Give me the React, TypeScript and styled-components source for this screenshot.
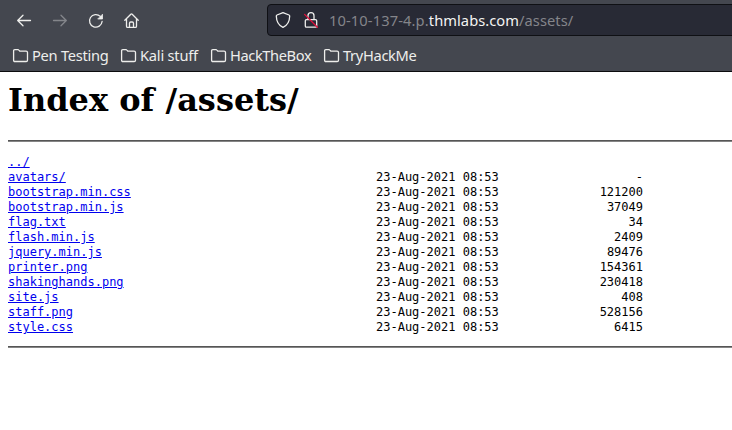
import React from 'react';
import styled, { createGlobalStyle } from 'styled-components';

const GlobalStyle = createGlobalStyle`
  * { box-sizing: border-box; }
  body { margin: 0; background: #fff; overflow: hidden; }
`;

const Browser = styled.div`
  width: 732px;
  height: 430px;
  overflow: hidden;
  background: #fff;
`;

const Chrome = styled.header`
  height: 72px;
  background: #44474f;
  border-bottom: 1px solid #0c0c0e;
  font-family: 'Noto Sans', sans-serif;
  color: #eeeeec;
`;

const Toolbar = styled.div`
  display: flex;
  height: 40px;
  padding: 4px 0 4px 12px;
`;

const NavButtons = styled.nav`
  display: flex;
  flex: 0 0 255px;
  gap: 11px;
`;

const NavButton = styled.button<{ $disabled?: boolean }>`
  display: flex;
  align-items: center;
  justify-content: center;
  width: 25px;
  height: 33px;
  padding: 0;
  border: 0;
  background: none;
  color: ${(p) => (p.$disabled ? '#84868b' : '#eeeeec')};
`;

const Icon = styled.svg`
  display: block;
  flex: none;
  fill: none;
  stroke: currentColor;
  stroke-width: 1.3;
  stroke-linecap: round;
  stroke-linejoin: round;
`;

const AddressBar = styled.div`
  display: flex;
  flex: none;
  align-items: center;
  width: 480px;
  height: 32px;
  padding-left: 7px;
  border: 1px solid #0f1014;
  border-radius: 4px;
  background: #282a35;
`;

const SiteIcons = styled.div`
  display: flex;
  flex: 0 0 54px;
  gap: 10px;
`;

const Url = styled.span`
  font-size: 14.67px;
  line-height: 20px;
  letter-spacing: 0.06px;
  white-space: pre;
  color: #84858a;
`;

const Host = styled.span`
  letter-spacing: 0.12px;
`;

const Domain = styled.span`
  color: #f4f4f2;
`;

const Bookmarks = styled.div`
  display: flex;
  height: 31px;
  padding-left: 12px;
`;

const Bookmark = styled.div<{ $width: number }>`
  display: flex;
  align-items: center;
  flex: 0 0 ${(p) => p.$width}px;
  gap: 3px;
`;

const BookmarkLabel = styled.span<{ $tracking: number }>`
  height: 22px;
  font-size: 14.67px;
  line-height: 20px;
  letter-spacing: ${(p) => p.$tracking}px;
  white-space: nowrap;
`;

const Page = styled.main`
  padding: 9px 0 0 8px;
  background: #fff;
  color: #000;
`;

const Title = styled.h1`
  margin: 0;
  height: 59px;
  font: bold 32px/38px 'DejaVu Serif', serif;
`;

const Rule = styled.hr`
  height: 2px;
  margin: 0;
  border: 0;
  border-top: 1px solid #555;
  background: #858585;
`;

const Listing = styled.div`
  padding: 13px 0 11px;
  font: 12px/15px 'DejaVu Sans Mono', monospace;
`;

const Entry = styled.div`
  display: grid;
  grid-template-columns: 368px 123px 144px;
  height: 15px;
`;

const FileLink = styled.a`
  justify-self: start;
  color: #0000ee;
  text-decoration: underline;
`;

const Size = styled.span`
  text-align: right;
`;

const bookmarks = [
  { name: 'Pen Testing', width: 108, tracking: -0.27 },
  { name: 'Kali stuff', width: 90, tracking: -0.22 },
  { name: 'HackTheBox', width: 113, tracking: -0.4 },
  { name: 'TryHackMe', width: 100, tracking: -0.33 },
];

const files: [string, string][] = [
  ['avatars/', '-'],
  ['bootstrap.min.css', '121200'],
  ['bootstrap.min.js', '37049'],
  ['flag.txt', '34'],
  ['flash.min.js', '2409'],
  ['jquery.min.js', '89476'],
  ['printer.png', '154361'],
  ['shakinghands.png', '230418'],
  ['site.js', '408'],
  ['staff.png', '528156'],
  ['style.css', '6415'],
];

const BackIcon = () => (
  <Icon width="17" height="17" viewBox="0 0 17 17">
    <path d="M14.5 8.5H1.8M7 3.2 1.7 8.5 7 13.8" />
  </Icon>
);

const ForwardIcon = () => (
  <Icon width="17" height="17" viewBox="0 0 17 17">
    <path d="M1.5 8.5h12.700M9 3.2l5.300 5.300L9 13.800" />
  </Icon>
);

const ReloadIcon = () => (
  <Icon width="17" height="17" viewBox="0 0 17 17">
    <path d="M12.300 4.400A6.300 6.300 0 1 0 14.100 9.500" />
    <path d="M14.500 2.600v4.400h-4.400z" fill="currentColor" strokeWidth=".8" />
  </Icon>
);

const HomeIcon = () => (
  <Icon width="17" height="17" viewBox="0 0 17 17">
    <path d="M.8 8.300 6.800 2.200q.7-.7 1.400 0l6 6.100M2.500 7v7.200q0 1.200 1.200 1.200h7.600q1.200 0 1.200-1.200V7M5.500 15.200v-4q0-1.200 1.200-1.200h1.600q1.200 0 1.200 1.200v4" />
  </Icon>
);

const ShieldIcon = () => (
  <Icon width="16" height="18" viewBox="0 0 16 18">
    <path d="M8 1.600 14 4q.7.3.7 1C14.600 10.500 12.500 14.300 8 16.400 3.500 14.300 1.400 10.500 1.300 5q0-.7.7-1z" />
  </Icon>
);

const InsecureIcon = () => (
  <Icon width="18" height="18" viewBox="0 0 18 18">
    <path d="M7 8.600V4.700a3 3 0 0 1 6 0v3.900M5.500 8.600h9q1.200 0 1.200 1.200v5.100q0 1.200-1.200 1.200h-9q-1.200 0-1.200-1.200V9.800q0-1.200 1.200-1.200z" />
    <path d="M3.600 3.400 16.400 16.200" stroke="#e2103c" />
  </Icon>
);

const FolderIcon = () => (
  <Icon width="17" height="17" viewBox="0 0 17 17">
    <path d="M1.600 3.800q0-1.200 1.200-1.200h3.100q.6 0 1 .5l1 1.100h6.200q1.400 0 1.400 1.300v7.700q0 1.300-1.300 1.300H2.900q-1.300 0-1.300-1.300z" />
  </Icon>
);

export default function App() {
  return (
    <Browser>
      <GlobalStyle />
      <Chrome>
        <Toolbar>
          <NavButtons>
            <NavButton aria-label="Back"><BackIcon /></NavButton>
            <NavButton aria-label="Forward" $disabled><ForwardIcon /></NavButton>
            <NavButton aria-label="Reload"><ReloadIcon /></NavButton>
            <NavButton aria-label="Home"><HomeIcon /></NavButton>
          </NavButtons>
          <AddressBar>
            <SiteIcons>
              <ShieldIcon />
              <InsecureIcon />
            </SiteIcons>
            <Url><Host>10-10-137-4.p.</Host><Domain>thmlabs.com</Domain>/assets/</Url>
          </AddressBar>
        </Toolbar>
        <Bookmarks>
          {bookmarks.map((b) => (
            <Bookmark key={b.name} $width={b.width}>
              <FolderIcon />
              <BookmarkLabel $tracking={b.tracking}>{b.name}</BookmarkLabel>
            </Bookmark>
          ))}
        </Bookmarks>
      </Chrome>
      <Page>
        <Title>Index of /assets/</Title>
        <Rule />
        <Listing>
          <Entry><FileLink>../</FileLink></Entry>
          {files.map(([name, size]) => (
            <Entry key={name}>
              <FileLink>{name}</FileLink>
              <span>23-Aug-2021 08:53</span>
              <Size>{size}</Size>
            </Entry>
          ))}
        </Listing>
        <Rule />
      </Page>
    </Browser>
  );
}
